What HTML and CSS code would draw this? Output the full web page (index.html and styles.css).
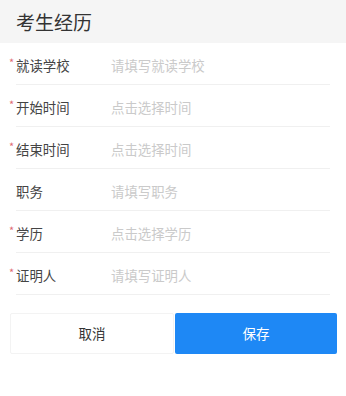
FILE: index.html
```html
<!DOCTYPE html>
<html lang="zh">
<head>
<meta charset="utf-8">
<link rel="stylesheet" href="styles.css">
</head>
<body>
<div class="page">
  <div class="header">考生经历</div>
  <div class="form">
    <div class="row"><span class="label"><span class="star">*</span>就读学校</span><span class="ph">请填写就读学校</span></div>
    <div class="row"><span class="label"><span class="star">*</span>开始时间</span><span class="ph">点击选择时间</span></div>
    <div class="row"><span class="label"><span class="star">*</span>结束时间</span><span class="ph">点击选择时间</span></div>
    <div class="row"><span class="label">职务</span><span class="ph">请填写职务</span></div>
    <div class="row"><span class="label"><span class="star">*</span>学历</span><span class="ph">点击选择学历</span></div>
    <div class="row"><span class="label"><span class="star">*</span>证明人</span><span class="ph">请填写证明人</span></div>
  </div>
  <div class="actions">
    <div class="btn cancel">取消</div>
    <div class="btn save">保存</div>
  </div>
</div>
</body>
</html>
```
FILE: styles.css
```css
html, body {
  margin: 0;
  padding: 0;
  background: #fff;
}
body {
  font-family: "Noto Sans CJK SC", "Noto Sans", sans-serif;
  color: #333;
}
.page {
  width: 346px;
  height: 396px;
  background: #fff;
}
.header {
  height: 43px;
  background: #f5f5f5;
  font-size: 19px;
  line-height: 43px;
  padding-left: 16px;
  color: #333;
}
.form {
  padding: 0 16px;
}
.row {
  height: 39px;
  padding-top: 2px;
  border-bottom: 1px solid #f0f0f0;
  display: flex;
  align-items: center;
}
.label {
  position: relative;
  width: 95px;
  flex: none;
  font-size: 13.4px;
  color: #444;
}
.star {
  position: absolute;
  left: -7px;
  top: -1px;
  color: #e06a74;
  font-size: 11px;
}
.ph {
  font-size: 13.4px;
  color: #cacaca;
}
.actions {
  display: flex;
  margin: 18px 9px 0 10px;
  gap: 1px;
}
.btn {
  flex: 1;
  height: 41px;
  line-height: 41px;
  text-align: center;
  font-size: 13.5px;
  border-radius: 2px;
}
.cancel {
  background: #fff;
  border: 1px solid #f3f3f3;
  height: 39px;
  line-height: 39px;
  color: #333;
}
.save {
  background: #1e88f5;
  color: #fff;
}
```
